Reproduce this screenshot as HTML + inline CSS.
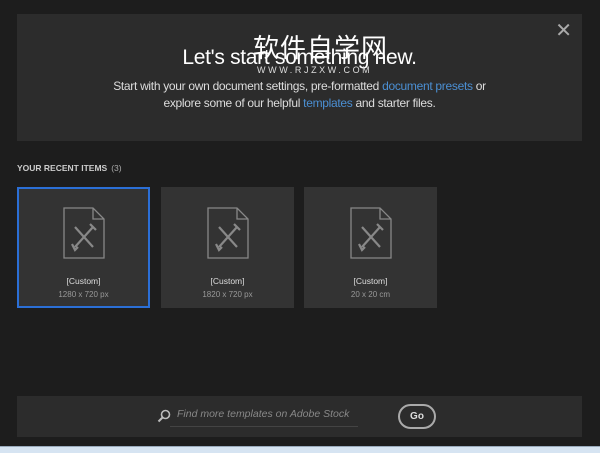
<!DOCTYPE html>
<html><head><meta charset="utf-8"><style>
*{margin:0;padding:0;box-sizing:border-box}
body{width:600px;height:453px;background:#1d1d1d;font-family:"Liberation Sans",sans-serif;position:relative;overflow:hidden}
.top{position:absolute;left:17px;top:14px;width:565px;height:127px;background:#2c2c2c}
.x{position:absolute;right:10px;top:4px;color:#aaa;font-size:20px}
h1{position:absolute;top:32px;width:100%;text-align:center;color:#fff;font-weight:normal;font-size:21px;letter-spacing:-0.3px}
.p{position:absolute;top:64px;width:100%;text-align:center;color:#ddd;font-size:12px;line-height:16.5px;letter-spacing:-0.3px}
.p span{color:#4b8fd3}
.wm{position:absolute;left:236px;top:18px;color:#fff;font-family:"Noto Sans CJK SC",sans-serif;font-size:26px;line-height:30px;letter-spacing:1px}
.wm2{position:absolute;left:240px;top:51px;color:#ddd;font-size:9px;letter-spacing:2.6px}
.hd{position:absolute;left:17px;top:163px;color:#ccc;font-size:8.5px;font-weight:bold}
.hd i{font-style:normal;font-weight:normal;color:#aaa;margin-left:4px}
.card{position:absolute;top:187px;width:133px;height:121px;background:#333;text-align:center}
.card.sel{border:2px solid #2b6fd6}
.card svg{position:absolute;left:46px;top:20px}
.t{position:absolute;top:89px;width:100%;color:#ddd;font-size:8.5px}
.s{position:absolute;top:103px;width:100%;color:#999;font-size:8px}
.bot{position:absolute;left:17px;top:396px;width:565px;height:41px;background:#2c2c2c}
.srch{position:absolute;left:160px;top:12px;color:#888;font-size:10.5px;font-style:italic}
.line{position:absolute;left:153px;top:30px;width:188px;height:1px;background:#444}
.go{position:absolute;left:381px;top:8px;width:38px;height:25px;border:2px solid #aaa;border-radius:13px;color:#ddd;font-size:10px;font-weight:bold;text-align:center;line-height:21px}
.strip{position:absolute;left:0;top:446px;width:600px;height:7px;background:#d6e4f2;border-top:1px solid #9ab}
</style></head><body>
<div class="top"><div class="x">✕</div>
<h1>Let's start something new.</h1>
<div class="p">Start with your own document settings, pre-formatted <span>document presets</span> or<br>explore some of our helpful <span>templates</span> and starter files.</div>
<div class="wm">软件自学网</div><div class="wm2">WWW.RJZXW.COM</div>
</div>
<div class="hd">YOUR RECENT ITEMS<i>(3)</i></div>
<div class="card sel" style="left:17px"><svg width="42" height="52" viewBox="0 0 42 52" style="left:44px;top:18px"><path d="M1 1H30L41 12V51H1Z M30 1V12H41" fill="none" stroke="#888" stroke-width="1.3"/><path d="M12 20L30 40M30 20L12 40M27 17L33 23M9 37L12 43L15 40" fill="none" stroke="#888" stroke-width="2.2"/></svg><div class="t" style="top:87px">[Custom]</div><div class="s" style="top:101px">1280 x 720 px</div></div>
<div class="card" style="left:161px"><svg width="42" height="52" viewBox="0 0 42 52"><path d="M1 1H30L41 12V51H1Z M30 1V12H41" fill="none" stroke="#888" stroke-width="1.3"/><path d="M12 20L30 40M30 20L12 40M27 17L33 23M9 37L12 43L15 40" fill="none" stroke="#888" stroke-width="2.2"/></svg><div class="t">[Custom]</div><div class="s">1820 x 720 px</div></div>
<div class="card" style="left:304px"><svg width="42" height="52" viewBox="0 0 42 52"><path d="M1 1H30L41 12V51H1Z M30 1V12H41" fill="none" stroke="#888" stroke-width="1.3"/><path d="M12 20L30 40M30 20L12 40M27 17L33 23M9 37L12 43L15 40" fill="none" stroke="#888" stroke-width="2.2"/></svg><div class="t">[Custom]</div><div class="s">20 x 20 cm</div></div>
<div class="bot"><svg style="position:absolute;left:140px;top:13px" width="14" height="14" viewBox="0 0 14 14"><circle cx="8.5" cy="5.5" r="4" fill="none" stroke="#bbb" stroke-width="1.6"/><path d="M5.5 8.5L1.5 12.5" stroke="#bbb" stroke-width="2"/></svg>
<div class="srch">Find more templates on Adobe Stock</div><div class="line"></div><div class="go">Go</div></div>
<div class="strip"></div>
</body></html>
